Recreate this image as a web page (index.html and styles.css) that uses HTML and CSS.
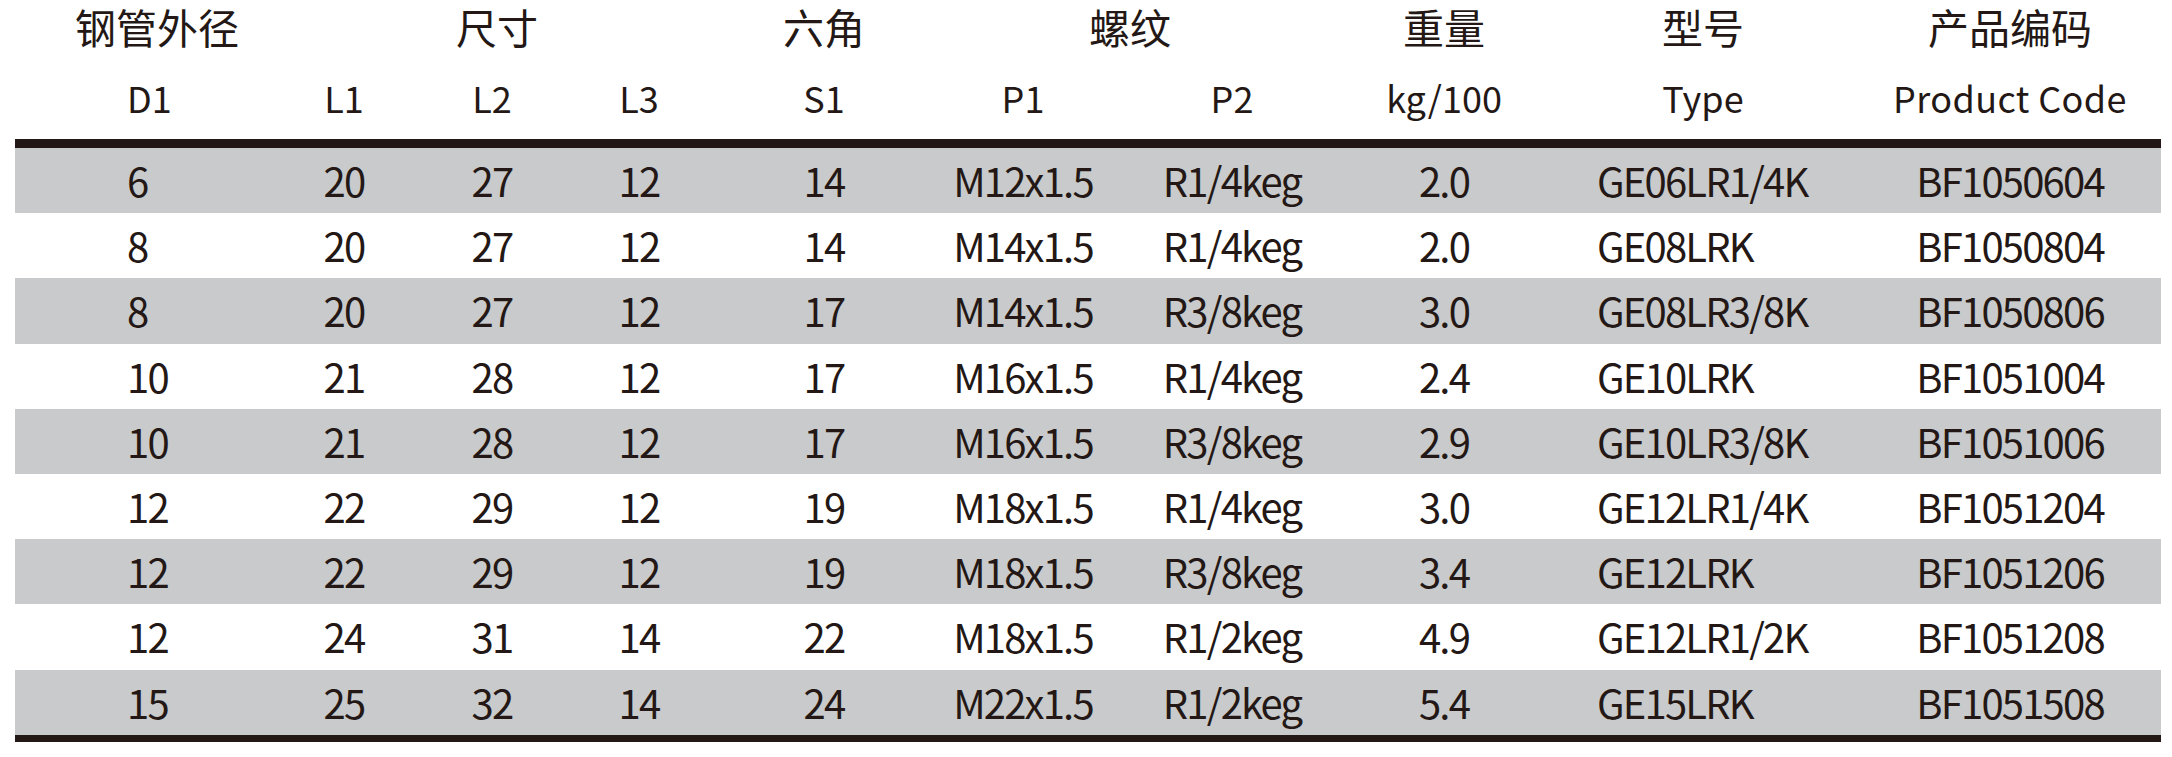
FILE: index.html
```html
<!DOCTYPE html>
<html lang="zh">
<head>
<meta charset="utf-8">
<title>产品规格表</title>
<link rel="stylesheet" href="styles.css">
</head>
<body>
<div class="sheet">
  <div class="row head-cn">
    <div class="c-d1 cn-d1">钢管外径</div>
    <div class="span-l cn-size">尺寸</div>
    <div class="c-s1">六角</div>
    <div class="span-p cn-thread">螺纹</div>
    <div class="c-w">重量</div>
    <div class="c-type">型号</div>
    <div class="c-code">产品编码</div>
  </div>
  <div class="row head-en">
    <div class="c-d1 left">D1</div>
    <div>L1</div>
    <div>L2</div>
    <div>L3</div>
    <div class="c-s1">S1</div>
    <div>P1</div>
    <div>P2</div>
    <div class="c-w">kg/100</div>
    <div class="c-type">Type</div>
    <div class="c-code">Product Code</div>
  </div>
  <div class="body">
    <div class="row data"><div class="left">6</div><div>20</div><div>27</div><div>12</div><div>14</div><div>M12x1.5</div><div>R1/4keg</div><div>2.0</div><div class="type">GE06LR1/4K</div><div>BF1050604</div></div>
    <div class="row data"><div class="left">8</div><div>20</div><div>27</div><div>12</div><div>14</div><div>M14x1.5</div><div>R1/4keg</div><div>2.0</div><div class="type">GE08LRK</div><div>BF1050804</div></div>
    <div class="row data"><div class="left">8</div><div>20</div><div>27</div><div>12</div><div>17</div><div>M14x1.5</div><div>R3/8keg</div><div>3.0</div><div class="type">GE08LR3/8K</div><div>BF1050806</div></div>
    <div class="row data"><div class="left">10</div><div>21</div><div>28</div><div>12</div><div>17</div><div>M16x1.5</div><div>R1/4keg</div><div>2.4</div><div class="type">GE10LRK</div><div>BF1051004</div></div>
    <div class="row data"><div class="left">10</div><div>21</div><div>28</div><div>12</div><div>17</div><div>M16x1.5</div><div>R3/8keg</div><div>2.9</div><div class="type">GE10LR3/8K</div><div>BF1051006</div></div>
    <div class="row data"><div class="left">12</div><div>22</div><div>29</div><div>12</div><div>19</div><div>M18x1.5</div><div>R1/4keg</div><div>3.0</div><div class="type">GE12LR1/4K</div><div>BF1051204</div></div>
    <div class="row data"><div class="left">12</div><div>22</div><div>29</div><div>12</div><div>19</div><div>M18x1.5</div><div>R3/8keg</div><div>3.4</div><div class="type">GE12LRK</div><div>BF1051206</div></div>
    <div class="row data"><div class="left">12</div><div>24</div><div>31</div><div>14</div><div>22</div><div>M18x1.5</div><div>R1/2keg</div><div>4.9</div><div class="type">GE12LR1/2K</div><div>BF1051208</div></div>
    <div class="row data"><div class="left">15</div><div>25</div><div>32</div><div>14</div><div>24</div><div>M22x1.5</div><div>R1/2keg</div><div>5.4</div><div class="type">GE15LRK</div><div>BF1051508</div></div>
  </div>
</div>
</body>
</html>
```

FILE: styles.css
```css
html, body {
  margin: 0;
  padding: 0;
  background: #ffffff;
}

body {
  font-family: "Noto Sans CJK SC", "Noto Sans", sans-serif;
  color: #231815;
}

.sheet {
  width: 2146px;
  margin-left: 15px;
}

.row {
  display: grid;
  grid-template-columns: 255px 148px 148px 146px 224px 174px 244px 180px 338px 276px 13px;
  text-align: center;
  white-space: nowrap;
}

.head-cn {
  height: 52px;
  font-size: 41px;
  line-height: 52px;
}

.head-cn .cn-d1 {
  text-align: left;
  padding-left: 60px;
}

.head-cn .span-l {
  grid-column: 2 / span 3;
  padding-left: 12px;
}

.head-cn .span-p {
  grid-column: 6 / span 2;
  padding-right: 30px;
}

.head-en {
  font-size: 36px;
  line-height: 60px;
  padding-top: 15px;
  padding-bottom: 12px;
}

.head-en .c-code {
  letter-spacing: 0.4px;
}

.left {
  text-align: left;
  padding-left: 112px;
}

.body {
  border-top: 9px solid #231815;
  border-bottom: 7px solid #231815;
}

.data {
  height: 65.2px;
  font-size: 40px;
  line-height: 65.2px;
  letter-spacing: -1.8px;
}

.data:nth-child(odd) {
  background: #c9cacb;
}

.data .type {
  text-align: left;
  padding-left: 63px;
}
```
